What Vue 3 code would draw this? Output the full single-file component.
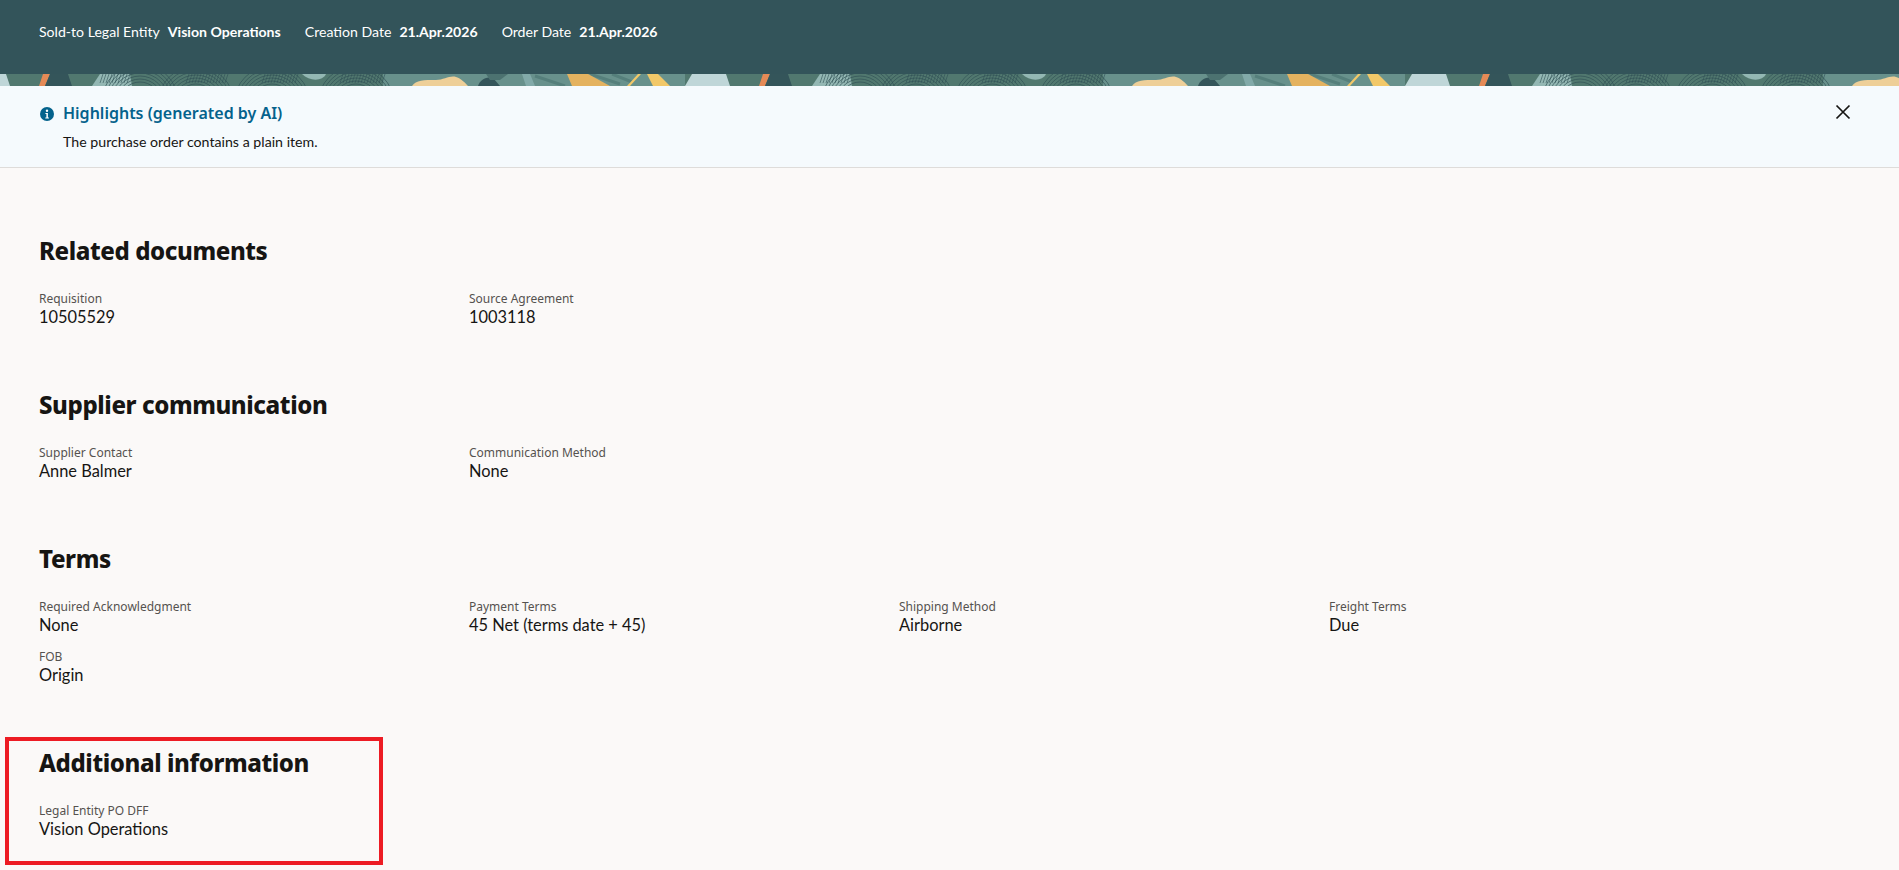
<template>
  <div class="page">
    <header class="po-header">
      <div class="po-meta">
        <span v-for="item in headerMeta" :key="item.label" class="meta-item">
          <span class="meta-label">{{ item.label }}</span>
          <span class="meta-value">{{ item.value }}</span>
        </span>
      </div>
    </header>

    <div class="band" aria-hidden="true">
      <svg width="100%" height="12" xmlns="http://www.w3.org/2000/svg">
        <defs>
          <pattern id="band-tile" width="720" height="12" patternUnits="userSpaceOnUse">
            <rect width="720" height="12" fill="#51786f" />
            <rect x="383" width="302" height="12" fill="#68918c" />
            <polygon points="0,0 6,0 10,12 0,12" fill="#bfd6d8" />
            <polygon points="43,0 50,0 45,12 39,12" fill="#e58a56" />
            <polygon points="50,0 68,0 72,12 45,12" fill="#34555a" />
            <polygon points="100,0 130,0 132,12 92,12" fill="#93b7b3" />
            <path d="M302 0h24c-3 7-16 8-24 0z" fill="#93b7b3" />
            <path :d="arcs" fill="none" stroke="#2f5055" stroke-width="0.7" />
            <path :d="hatches" fill="none" stroke="#2f5055" stroke-width="0.6" />
            <path d="M412 12c4-6 12-6 24-6 8 0 14-5 20-3 6 2 9 6 12 9z" fill="#eecf98" />
            <path d="M478 12c2-7 10-11 16-7l6 7z" fill="#34555a" />
            <polygon points="486,0 508,0 500,6 490,6" fill="#4c7270" />
            <polygon points="522,0 530,0 535,12 526,12" fill="#82aaa9" />
            <path d="M535 2l30 10M590 0l30 10M612 0l20 8" stroke="#557f7b" stroke-width="3" fill="none" />
            <polygon points="567,0 588,0 610,12 572,12" fill="#e4b25f" />
            <polygon points="638,0 641,0 630,12 627,12" fill="#f2c868" />
            <polygon points="647,0 658,0 670,12 653,12" fill="#f2c868" />
            <polygon points="692,0 720,0 728,12 685,12" fill="#bfd6d8" />
          </pattern>
        </defs>
        <rect width="100%" height="12" fill="url(#band-tile)" />
      </svg>
    </div>

    <section class="highlights">
      <svg class="info-icon" width="14" height="14" viewBox="0 0 14 14" xmlns="http://www.w3.org/2000/svg">
        <circle cx="7" cy="7" r="7" fill="#04628c" />
        <circle cx="7" cy="3.8" r="1.2" fill="#fff" />
        <path d="M5.4 6h2.5v4.4h1v1.1H5.3v-1.1h1.1V7.1h-1z" fill="#fff" />
      </svg>
      <div class="highlights-body">
        <div class="highlights-title">Highlights (generated by AI)</div>
        <div class="highlights-text">The purchase order contains a plain item.</div>
      </div>
      <button class="close-btn" aria-label="Close">
        <svg width="16" height="16" viewBox="0 0 16 16" xmlns="http://www.w3.org/2000/svg">
          <path d="M1.5 1.5l13 13M14.5 1.5l-13 13" stroke="#161513" stroke-width="1.7" fill="none" />
        </svg>
      </button>
    </section>

    <main class="content">
      <section v-for="group in sections" :key="group.title" class="doc-section" :class="{ marked: group.marked }">
        <h2>{{ group.title }}</h2>
        <div class="field-grid">
          <div v-for="field in group.fields" :key="field.label" class="field">
            <div class="field-label">{{ field.label }}</div>
            <div class="field-value">{{ field.value }}</div>
          </div>
        </div>
      </section>
    </main>
  </div>
</template>

<script setup>
const headerMeta = [
  { label: 'Sold-to Legal Entity', value: 'Vision Operations' },
  { label: 'Creation Date', value: '21.Apr.2026' },
  { label: 'Order Date', value: '21.Apr.2026' }
]

const sections = [
  {
    title: 'Related documents',
    fields: [
      { label: 'Requisition', value: '10505529' },
      { label: 'Source Agreement', value: '1003118' }
    ]
  },
  {
    title: 'Supplier communication',
    fields: [
      { label: 'Supplier Contact', value: 'Anne Balmer' },
      { label: 'Communication Method', value: 'None' }
    ]
  },
  {
    title: 'Terms',
    fields: [
      { label: 'Required Acknowledgment', value: 'None' },
      { label: 'Payment Terms', value: '45 Net (terms date + 45)' },
      { label: 'Shipping Method', value: 'Airborne' },
      { label: 'Freight Terms', value: 'Due' },
      { label: 'FOB', value: 'Origin' }
    ]
  },
  {
    title: 'Additional information',
    marked: true,
    fields: [{ label: 'Legal Entity PO DFF', value: 'Vision Operations' }]
  }
]

// fingerprint texture of the banner: concentric arcs and fine hatching
const arcCentres = [
  [140, 28],
  [196, 30],
  [272, 30],
  [356, 30]
]
const arcs = arcCentres
  .flatMap(([cx, cy]) =>
    [20, 23, 26, 29, 32, 35, 38].map((r) => `M${cx - r} ${cy}a${r} ${r} 0 0 1 ${r * 2} 0`)
  )
  .join('')

const hatchRanges = [
  [100, 130],
  [186, 228],
  [262, 296],
  [340, 383]
]
const hatches = hatchRanges
  .flatMap(([from, to]) => {
    const lines = []
    for (let x = from; x < to; x += 3) lines.push(`M${x + 3} 0l-3 9`)
    return lines
  })
  .join('')
</script>

<style>
html,
body {
  margin: 0;
  background: #fbf9f8;
}
</style>

<style scoped>
.page {
  height: 870px;
  overflow: hidden;
  background: #fbf9f8;
  color: #161513;
  font-family: Lato, "Noto Sans", sans-serif;
}

.po-header {
  height: 74px;
  background: #33545a;
  padding: 22px 39px 0;
  box-sizing: border-box;
}

.po-meta {
  display: flex;
  gap: 24px;
  font-size: 14.1px;
  line-height: 20px;
  color: #fff;
}

.meta-item {
  display: flex;
  gap: 8px;
}

.meta-value {
  font-weight: 700;
}

.band {
  height: 12px;
  line-height: 0;
}

.highlights {
  height: 81px;
  display: flex;
  gap: 9px;
  padding: 0 39px 0 40px;
  background: #f5fafd;
  border-bottom: 1px solid #dedcda;
}

.info-icon {
  margin-top: 21px;
  flex-shrink: 0;
}

.highlights-body {
  flex: 1;
  padding-top: 16px;
}

.highlights-title {
  font-family: "Noto Sans", sans-serif;
  font-size: 16px;
  line-height: 22px;
  font-weight: 600;
  color: #04628c;
}

.highlights-text {
  margin-top: 8px;
  font-size: 14.2px;
  line-height: 20px;
}

.close-btn {
  border: 0;
  padding: 0;
  background: none;
  width: 16px;
  height: 16px;
  margin: 18px 9px 0 0;
  cursor: pointer;
}

.content {
  padding-top: 67px;
}

.doc-section {
  padding: 0 39px;
  margin-bottom: 63px;
}

.doc-section h2 {
  margin: 0 0 24px;
  font-family: "Noto Sans", sans-serif;
  font-size: 24px;
  line-height: 32px;
  font-weight: 800;
  letter-spacing: -0.4px;
}

.field-grid {
  display: grid;
  grid-template-columns: repeat(4, 430px);
  row-gap: 15px;
}

.field-label {
  font-family: "Noto Sans", sans-serif;
  font-size: 12px;
  line-height: 16px;
  color: #55524f;
}

.field-value {
  margin-top: 1px;
  font-size: 16.4px;
  line-height: 18px;
}

.doc-section.marked {
  position: relative;
}

.doc-section.marked::after {
  content: "";
  position: absolute;
  left: 5px;
  top: -10px;
  width: 378px;
  height: 128px;
  box-sizing: border-box;
  border: 4px solid #ed1c24;
}
</style>
